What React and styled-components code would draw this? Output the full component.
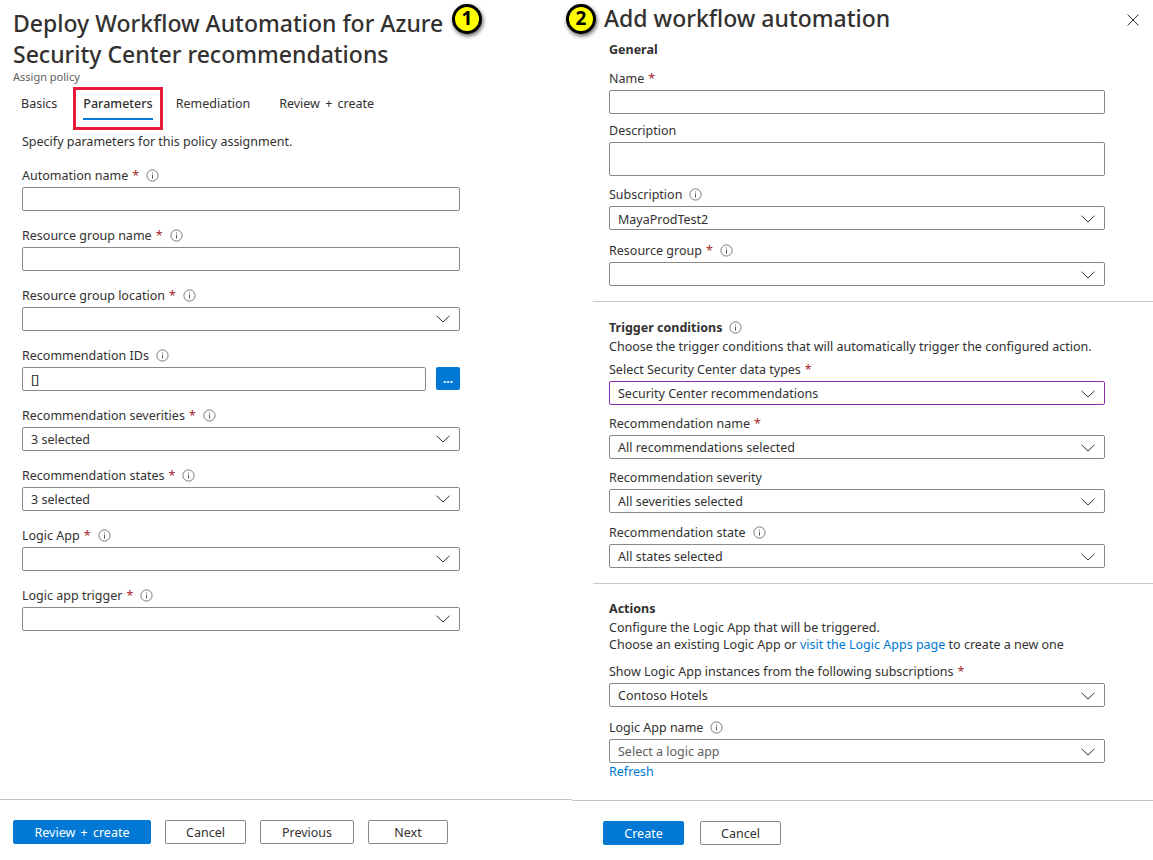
import React from 'react';
import styled, { createGlobalStyle } from 'styled-components';

const GlobalStyle = createGlobalStyle`
  html, body {
    margin: 0;
    padding: 0;
    background: #fff;
  }
  body {
    font-family: "Noto Sans", "Open Sans", "Liberation Sans", sans-serif;
    font-size: 12.5px;
    color: #323130;
  }
`;

const Page = styled.div`
  width: 1153px;
  height: 860px;
  overflow: hidden;
  display: grid;
  grid-template-columns: 572px 581px;
`;

const Panel = styled.section`
  position: relative;
  height: 860px;
  display: flex;
  flex-direction: column;
`;

const Badge = styled.div`
  position: absolute;
  top: 4px;
  left: ${(p) => p.$left}px;
  width: 30px;
  height: 30px;
  box-sizing: border-box;
  border: 3px solid #000;
  border-radius: 50%;
  background: #ffff00;
  color: #000;
  font-size: 19px;
  font-weight: 700;
  line-height: 23px;
  text-align: center;
  box-shadow: 1px 2px 4px rgba(0, 0, 0, 0.65);
`;

const Title = styled.h1`
  margin: 0;
  padding: 8px 0 0 13px;
  font-size: 23px;
  font-weight: 500;
  line-height: 31px;
  width: 450px;
`;

const Subtitle = styled.div`
  padding-left: 13px;
  font-size: 11px;
  line-height: 14px;
  color: #605e5c;
`;

const Tabs = styled.nav`
  display: flex;
  margin-top: 10px;
  padding-left: 21px;
  height: 34px;
`;

const Tab = styled.div`
  position: relative;
  height: 26px;
  line-height: 20px;
  box-sizing: border-box;
  white-space: nowrap;
  word-spacing: 2px;
  margin-right: ${(p) => p.$gap || 0}px;
  ${(p) => p.$active && `
    border-bottom: 2px solid #0078d4;
    font-weight: 500;
    &::after {
      content: '';
      position: absolute;
      left: -10px;
      right: -10px;
      top: -7px;
      bottom: -12px;
      border: 3px solid #e81b3c;
    }
  `}
`;

const Intro = styled.p`
  margin: 0;
  padding: 5px 0 0 22px;
  line-height: 18px;
`;

const LeftForm = styled.div`
  display: flex;
  flex-direction: column;
  gap: 13px;
  margin-top: 13px;
  padding: 0 112px 0 22px;
`;

const Field = styled.div`
  display: flex;
  flex-direction: column;
`;

const Label = styled.label`
  display: flex;
  align-items: center;
  height: 23px;
  white-space: nowrap;
`;

const Star = styled.span`
  color: #a4262c;
  margin-left: 4px;
`;

const InfoIcon = styled.svg`
  width: 13px;
  height: 13px;
  margin-left: 7px;
  flex: none;
`;

const Input = styled.div`
  box-sizing: border-box;
  height: ${(p) => p.$height || 24}px;
  flex: 1 0 auto;
  display: flex;
  align-items: center;
  justify-content: space-between;
  padding: 0 8px;
  border: 1px solid ${(p) => p.$accent || '#8a8886'};
  border-radius: 2px;
  background: #fff;
  color: ${(p) => (p.$muted ? '#605e5c' : '#323130')};
  white-space: nowrap;
`;

const InputRow = styled.div`
  display: flex;
  gap: 10px;
`;

const DotsButton = styled.div`
  width: 24px;
  height: 23px;
  border-radius: 2px;
  background: #0078d4;
  color: #fff;
  font-size: 12px;
  font-weight: 700;
  line-height: 23px;
  text-align: center;
`;

const Footer = styled.footer`
  margin-top: auto;
  height: ${(p) => p.$height}px;
  box-sizing: border-box;
  border-top: 1px solid #c4c4c4;
  display: flex;
  align-items: flex-start;
  gap: ${(p) => p.$gap}px;
  padding: 20px 0 0 ${(p) => p.$inset}px;
`;

const Button = styled.div`
  box-sizing: border-box;
  width: ${(p) => p.$width}px;
  height: 24px;
  border: 1px solid ${(p) => (p.$primary ? '#0078d4' : '#8a8886')};
  border-radius: 2px;
  background: ${(p) => (p.$primary ? '#0078d4' : '#fff')};
  color: ${(p) => (p.$primary ? '#fff' : '#323130')};
  line-height: 24px;
  word-spacing: 2px;
  text-align: center;
  white-space: nowrap;
`;

const RightHeader = styled.header`
  display: flex;
  align-items: center;
  justify-content: space-between;
  height: 39px;
  padding: 0 14px 0 32px;
`;

const RightTitle = styled.h2`
  margin: 0 0 3px;
  font-size: 23px;
  font-weight: 500;
`;

const CloseIcon = styled.svg`
  width: 12px;
  height: 12px;
`;

const Section = styled.div`
  display: flex;
  flex-direction: column;
  padding: ${(p) => p.$pad || '0'} 48px 0 37px;
`;

const Divider = styled.hr`
  margin: ${(p) => p.$top}px 0 0 21px;
  border: 0;
  border-top: 1px solid #c8c8c8;
`;

const SectionTitle = styled.div`
  display: flex;
  align-items: center;
  height: ${(p) => p.$height || 21}px;
  font-weight: 700;
`;

const Note = styled.div`
  line-height: 17.5px;
  white-space: nowrap;
`;

const Link = styled.a`
  color: #0078d4;
  text-decoration: none;
`;

const RightField = styled(Field)`
  margin-top: ${(p) => p.$top || 0}px;

  ${Input} {
    padding-top: 2px;
  }
`;

const Info = () => (
  <InfoIcon viewBox="0 0 13 13">
    <circle cx="6.5" cy="6.5" r="5.6" fill="none" stroke="#7a7876" />
    <rect x="6" y="5.6" width="1" height="4" fill="#605e5c" />
    <rect x="6" y="3.5" width="1" height="1" fill="#605e5c" />
  </InfoIcon>
);

const Chevron = () => (
  <svg width="14" height="8" viewBox="0 0 14 8" fill="none" style={{ flex: 'none', marginRight: 1 }}>
    <path d="M0.5 0.8 L7 7 L13.5 0.8" stroke="#323130" strokeWidth="1" />
  </svg>
);

const FormField = ({ label, required, info, value, select, muted, accent, height, top, as: Wrap = Field }) => (
  <Wrap $top={top}>
    <Label>
      {label}
      {required && <Star>*</Star>}
      {info && <Info />}
    </Label>
    <Input $height={height} $muted={muted} $accent={accent}>
      <span>{value}</span>
      {select && <Chevron />}
    </Input>
  </Wrap>
);

export default function App() {
  return (
    <Page>
      <GlobalStyle />
      <Panel>
        <Badge $left={452}>1</Badge>
        <Title>Deploy Workflow Automation for Azure Security Center recommendations</Title>
        <Subtitle>Assign policy</Subtitle>
        <Tabs>
          <Tab $gap={26}>Basics</Tab>
          <Tab $active $gap={23}>Parameters</Tab>
          <Tab $gap={29}>Remediation</Tab>
          <Tab>Review + create</Tab>
        </Tabs>
        <Intro>Specify parameters for this policy assignment.</Intro>
        <LeftForm>
          <FormField label="Automation name" required info />
          <FormField label="Resource group name" required info />
          <FormField label="Resource group location" required info select />
          <Field>
            <Label>
              Recommendation IDs
              <Info />
            </Label>
            <InputRow>
              <Input>
                <span>[]</span>
              </Input>
              <DotsButton>...</DotsButton>
            </InputRow>
          </Field>
          <FormField label="Recommendation severities" required info select value="3 selected" />
          <FormField label="Recommendation states" required info select value="3 selected" />
          <FormField label="Logic App" required info select />
          <FormField label="Logic app trigger" required info select />
        </LeftForm>
        <Footer $height={61} $inset={13} $gap={14}>
          <Button $primary $width={138}>Review + create</Button>
          <Button $width={81}>Cancel</Button>
          <Button $width={94}>Previous</Button>
          <Button $width={80}>Next</Button>
        </Footer>
      </Panel>

      <Panel>
        <Badge $left={-6}>2</Badge>
        <RightHeader>
          <RightTitle>Add workflow automation</RightTitle>
          <CloseIcon viewBox="0 0 12 12">
            <path d="M0.5 0.5 L11.5 11.5 M11.5 0.5 L0.5 11.5" stroke="#323130" fill="none" />
          </CloseIcon>
        </RightHeader>
        <Section>
          <SectionTitle>General</SectionTitle>
          <FormField as={RightField} top={7} label="Name" required />
          <FormField as={RightField} top={5} label="Description" height={34} />
          <FormField as={RightField} top={7} label="Subscription" info select value="MayaProdTest2" />
          <FormField as={RightField} top={9} label="Resource group" required info select />
        </Section>
        <Divider $top={15} />
        <Section $pad="15px">
          <SectionTitle>
            Trigger conditions
            <Info />
          </SectionTitle>
          <Note>Choose the trigger conditions that will automatically trigger the configured action.</Note>
          <FormField as={RightField} top={2} label="Select Security Center data types" required select value="Security Center recommendations" accent="#8c2eaf" />
          <FormField as={RightField} top={7} label="Recommendation name" required select value="All recommendations selected" />
          <FormField as={RightField} top={7} label="Recommendation severity" select value="All severities selected" />
          <FormField as={RightField} top={8} label="Recommendation state" info select value="All states selected" />
        </Section>
        <Divider $top={15} />
        <Section $pad="15px">
          <SectionTitle $height={20}>Actions</SectionTitle>
          <Note>Configure the Logic App that will be triggered.</Note>
          <Note>
            Choose an existing Logic App or <Link href="#">visit the Logic Apps page</Link> to create a new one
          </Note>
          <FormField as={RightField} top={6} label="Show Logic App instances from the following subscriptions" required select value="Contoso Hotels" />
          <FormField as={RightField} top={9} label="Logic App name" info select value="Select a logic app" muted />
          <Link href="#">Refresh</Link>
        </Section>
        <Footer $height={60} $inset={31} $gap={16}>
          <Button $primary $width={81}>Create</Button>
          <Button $width={81}>Cancel</Button>
        </Footer>
      </Panel>
    </Page>
  );
}
